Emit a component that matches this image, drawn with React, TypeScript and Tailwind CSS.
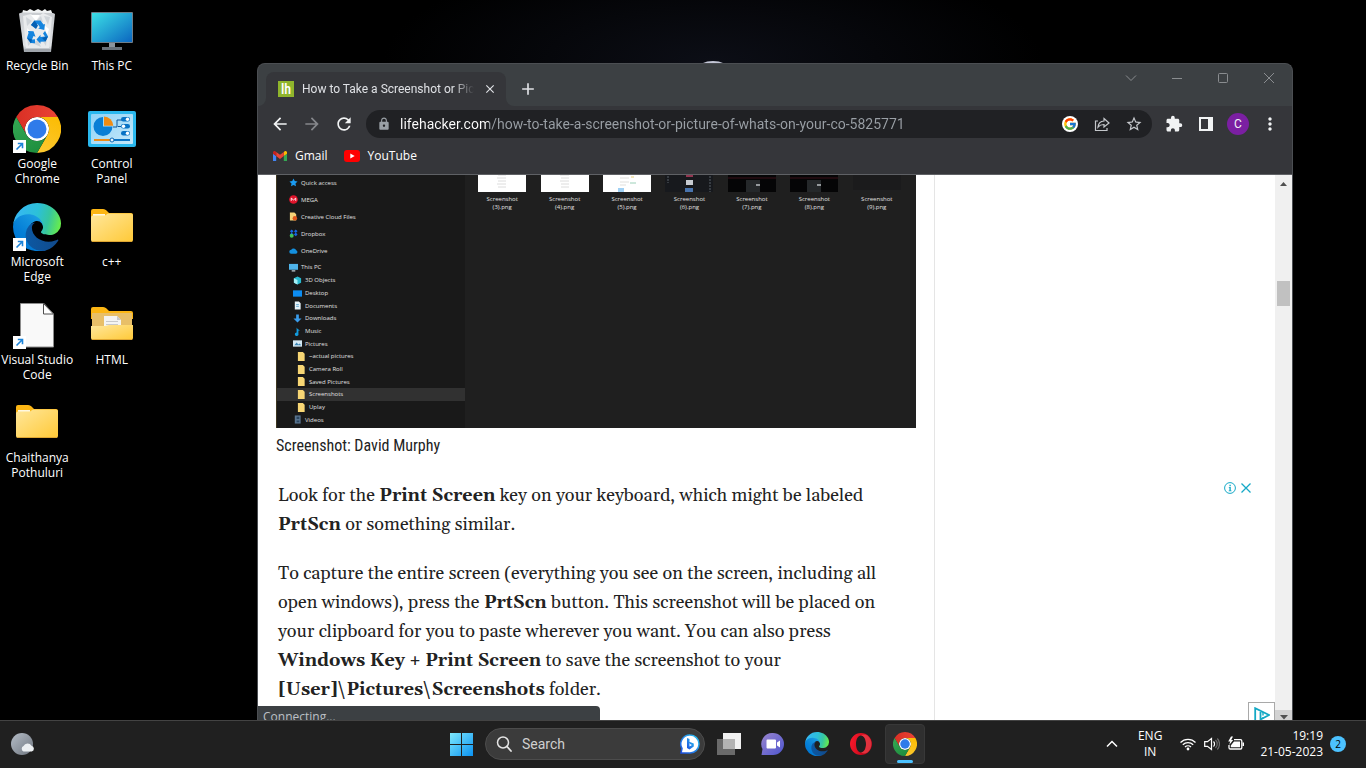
import type { ReactNode } from "react";
import { FcGoogle } from "react-icons/fc";
import {
  MdAdd,
  MdArrowBack,
  MdArrowForward,
  MdClose,
  MdExtension,
  MdLock,
  MdMoreVert,
  MdRefresh,
  MdStarOutline,
} from "react-icons/md";

function ChromeLogo({ className }: { className: string }) {
  return (
    <svg viewBox="0 0 48 48" className={className} aria-hidden="true">
      <defs>
        <linearGradient id="chrome-red" x1="3.2" y1="15" x2="44.8" y2="15" gradientUnits="userSpaceOnUse">
          <stop stopColor="#d93025" />
          <stop offset="1" stopColor="#ea4335" />
        </linearGradient>
        <linearGradient id="chrome-yellow" x1="20.7" y1="47.7" x2="41.5" y2="11.7" gradientUnits="userSpaceOnUse">
          <stop stopColor="#fcc934" />
          <stop offset="1" stopColor="#fbbc04" />
        </linearGradient>
        <linearGradient id="chrome-green" x1="26.6" y1="46.5" x2="5.8" y2="10.5" gradientUnits="userSpaceOnUse">
          <stop stopColor="#1e8e3e" />
          <stop offset="1" stopColor="#34a853" />
        </linearGradient>
      </defs>
      <circle cx="24" cy="24" r="12" fill="#fff" />
      <path d="M24,12H44.7812a23.9939,23.9939,0,0,0-41.5639.0029L13.6079,30l.0093-.0024A11.9852,11.9852,0,0,1,24,12Z" fill="url(#chrome-red)" />
      <path d="M34.3913,30.0029,24.0007,48A23.994,23.994,0,0,0,44.78,12.0031H23.9989l-.0025.0093A11.985,11.985,0,0,1,34.3913,30.0029Z" fill="url(#chrome-yellow)" />
      <path d="M13.6086,30.0031,3.218,12.006A23.994,23.994,0,0,0,24.0025,48L34.3931,30.0029l-.0067-.0068a11.9852,11.9852,0,0,1-20.7778.007Z" fill="url(#chrome-green)" />
      <circle cx="24" cy="24" r="9.5" fill="#2f7bea" />
    </svg>
  );
}

function EdgeLogo({ className }: { className: string }) {
  return (
    <svg viewBox="0 0 256 256" className={className} aria-hidden="true">
      <defs>
        <linearGradient id="edge-navy" x1="63" y1="178" x2="242" y2="178" gradientUnits="userSpaceOnUse">
          <stop stopColor="#0c59a4" />
          <stop offset="1" stopColor="#114a8b" />
        </linearGradient>
        <linearGradient id="edge-blue" x1="157" y1="100" x2="46" y2="221" gradientUnits="userSpaceOnUse">
          <stop stopColor="#1b9de2" />
          <stop offset="0.16" stopColor="#1595df" />
          <stop offset="0.67" stopColor="#0680d7" />
          <stop offset="1" stopColor="#0078d4" />
        </linearGradient>
        <linearGradient id="edge-green" x1="20" y1="60" x2="250" y2="115" gradientUnits="userSpaceOnUse">
          <stop stopColor="#35b8f1" />
          <stop offset="0.45" stopColor="#2cc0d8" />
          <stop offset="0.72" stopColor="#36c6a0" />
          <stop offset="1" stopColor="#66eb4e" />
        </linearGradient>
      </defs>
      <path fill="url(#edge-navy)" d="M235.7 195.5a93.7 93.7 0 0 1-10.6 4.7 101.9 101.9 0 0 1-35.9 6.4c-47.3 0-88.5-32.5-88.5-74.3a31.5 31.5 0 0 1 16.4-27.3c-42.8 1.8-53.8 46.4-53.8 72.5 0 74 68.1 81.4 82.8 81.4 7.9 0 19.8-2.3 27-4.6l1.3-.4a128.3 128.3 0 0 0 66.6-52.8 4 4 0 0 0-5.3-5.6Z" />
      <path fill="url(#edge-blue)" d="M105.7 241.4a79.2 79.2 0 0 1-22.7-21.3 80.7 80.7 0 0 1 29.5-120c3.2-1.5 8.5-4.1 15.6-4a32.4 32.4 0 0 1 25.7 13 31.9 31.9 0 0 1 6.3 18.7c0-.2 24.5-79.6-80-79.6-43.9 0-80 41.6-80 78.2a130.2 130.2 0 0 0 12.1 56 128 128 0 0 0 156.4 67 75.5 75.5 0 0 1-62.8-8Z" />
      <path fill="url(#edge-green)" d="M152.3 148.9c-.8 1-3.3 2.5-3.3 5.7 0 2.6 1.7 5.1 4.7 7.2 14.4 10 41.5 8.7 41.6 8.7 10.7 0 21.1-2.9 30.3-8.3A61.4 61.4 0 0 0 256 109.2c.2-22.6-8-37.6-11.4-44.1C223.5 23.9 177.9 0 128.3 0A128 128 0 0 0 .3 126.2c.5-36.5 36.8-66 80-66 3.5 0 23.5.3 42 10.1 16.3 8.6 24.9 18.9 30.8 29.2 6.2 10.7 7.3 24.1 7.3 29.5 0 5.3-2.7 13.3-8.1 19.9Z" />
    </svg>
  );
}

function RecycleBin() {
  return (
    <svg viewBox="0 0 48 48" className="size-12" aria-hidden="true">
      <defs>
        <linearGradient id="bin-body" x1="0" y1="0" x2="0" y2="1">
          <stop stopColor="#c9ccd0" />
          <stop offset="0.85" stopColor="#dfe2e5" />
          <stop offset="1" stopColor="#9da2a8" />
        </linearGradient>
      </defs>
      <path d="M9 7l1-4 4 1 3-2 4 2 4-2 4 2 3-2 2 2 4-1 2 5z" fill="#f1f3f4" />
      <path d="M6 6.500l3-1 31 .5 2 1-4 38H11z" fill="url(#bin-body)" />
      <path d="M10 9l8-2 5 4 7-5 9 4-3 31H13z" fill="#e9ebed" />
      <path d="M13 10l6 4-5 5zM31 9l6 1-2 8zM14 29l6 5-5 5zM29 33l5-4-1 10zM23 14l5-5 2 6zM19 36l6-3 3 7z" fill="#cfd4d9" />
      <path d="M18 8l5 6 4-6zM31 18l5 4-2 6zM14 21l3 3-2 4z" fill="#fff" />
      <path d="M11.500 42h26l-.4 3H12z" fill="#a0a5ab" />
      <g fill="#1484de">
        <path d="M18 18l3.500-4.500h6l3 4 1.500-.500-.800 6-6-1.500 1.700-1.200-2.400-3.600-2 4.300z" />
        <path d="M32 24l3 5.500-2.500 5-5 .3v2l-4-4.300 4-4.800v2.300l4.500-.500-2-3z" />
        <path d="M15 24l5.500.200 2 5.500-2-.700-1.500 3.500 3-.200v4l-4.500-.300-3.500-5 1.500-5z" />
      </g>
      <path d="M18 18l3.500-4.500 3.500 5-2 3.500zM32 30l3-.500-2.500 5-3.500-3.500zM14 31l5 1.500-1 3.800z" fill="#0560b4" />
    </svg>
  );
}

function ThisPc() {
  return (
    <svg viewBox="0 0 48 48" className="size-12" aria-hidden="true">
      <defs>
        <linearGradient id="pc-screen" x1="0" y1="0" x2="1" y2="1">
          <stop stopColor="#3bdfe6" />
          <stop offset="1" stopColor="#0b66c0" />
        </linearGradient>
      </defs>
      <path d="M21 35h6v6h-6z" fill="#8b949c" />
      <path d="M14 40h20v3H14z" fill="#68717a" />
      <rect x="3" y="5" width="42" height="31" rx="1" fill="#6f7d88" />
      <rect x="4" y="6" width="40" height="29" fill="url(#pc-screen)" />
    </svg>
  );
}

function ControlPanel() {
  return (
    <svg viewBox="0 0 48 48" className="size-12" aria-hidden="true">
      <defs>
        <linearGradient id="panel-in" x1="0" y1="0" x2="1" y2="1">
          <stop stopColor="#8fd3f7" />
          <stop offset="1" stopColor="#c4e8fa" />
        </linearGradient>
      </defs>
      <rect y="6" width="48" height="36" rx="2" fill="#2ab8ee" />
      <rect x="3" y="9" width="42" height="30" rx="1" fill="url(#panel-in)" />
      <path d="M15 12a9.500 9.500 0 1 0 9.500 9.500H15z" fill="#0a7fd6" />
      <path d="M16 11.500a9.500 9.500 0 0 1 9.300 9.200H16z" fill="#f08c14" />
      <path d="M25 22h4v-7h5M33 21.500h-3" fill="none" stroke="#0d579b" strokeWidth="1" />
      <rect x="33" y="12" width="9" height="4.500" rx="2.200" fill="#0873c5" />
      <rect x="33" y="19" width="9" height="4.500" rx="2.200" fill="#0873c5" />
      <rect x="33" y="26" width="9" height="4.500" rx="2.200" fill="#0873c5" />
      <g fill="#fff">
        <circle cx="39.500" cy="14.200" r="1.700" />
        <circle cx="35.500" cy="21.200" r="1.700" />
        <circle cx="39.500" cy="28.200" r="1.700" />
      </g>
      <path d="M6 34h18v2H6z" fill="#f08c14" />
      <path d="M24 34h18v2H24z" fill="#0873c5" />
      <circle cx="24" cy="35" r="2" fill="#e8f6ff" stroke="#0d69b5" />
    </svg>
  );
}

function Folder({ open = false }: { open?: boolean }) {
  return (
    <svg viewBox="0 0 48 48" className="size-12" aria-hidden="true">
      <defs>
        <linearGradient id="folder-front" x1="0" y1="0" x2="1" y2="1">
          <stop stopColor="#ffe79b" />
          <stop offset="1" stopColor="#ffc937" />
        </linearGradient>
      </defs>
      <path d="M3 8a2 2 0 0 1 2-2h10c2 0 3 1 4 2l2 2h22a2 2 0 0 1 2 2v6H3z" fill="#fcb614" />
      {open ? (
        <>
          <path d="M4 12h40v18H4z" fill="#e8bf68" />
          <path d="M16 15h13l4 4v14H16z" fill="#f4f4f2" />
          <path d="M29 15l4 4h-4zM18 20h12v1H18zM18 23h12v1H18z" fill="#c8c9ca" />
          <path d="M3 25h14l4-1 3 0 2 0h19v13a2 2 0 0 1-2 2H5a2 2 0 0 1-2-2z" fill="url(#folder-front)" />
        </>
      ) : (
        <>
          <path d="M5 11h12v3H5z" fill="#fff8e0" />
          <path d="M3 14.500a2 2 0 0 1 2-2h12l3-2h23a2 2 0 0 1 2 2v24.500a2 2 0 0 1-2 2H5a2 2 0 0 1-2-2z" fill="url(#folder-front)" />
        </>
      )}
      <path d="M4 38.500h40" stroke="#dfa632" strokeWidth="1" />
    </svg>
  );
}

function BlankPage() {
  return (
    <svg viewBox="0 0 48 48" className="size-12" aria-hidden="true">
      <path d="M7.500 2.500h23.500l9.500 10.500v33h-33z" fill="#f9f9f9" stroke="#8c8c8c" />
      <path d="M30.500 2.500v10.500h10z" fill="#fff" stroke="#4e4e4e" />
    </svg>
  );
}

function Shortcut({ children }: { children: ReactNode }) {
  return (
    <span className="relative">
      {children}
      <svg viewBox="0 0 13 13" className="absolute bottom-0 left-0 size-[13px]" aria-hidden="true">
        <path d="M0 0h13v13H0z" fill="#fff" />
        <path d="M3.500 9.500l5.500-5.500M4.800 3.500h4.700v4.700" fill="none" stroke="#1c83d8" strokeWidth="1.600" />
      </svg>
    </span>
  );
}

const desktopItems: { label: string; icon: ReactNode }[] = [
  { label: "Recycle Bin", icon: <RecycleBin /> },
  { label: "This PC", icon: <ThisPc /> },
  { label: "Google Chrome", icon: <Shortcut><ChromeLogo className="size-12" /></Shortcut> },
  { label: "Control Panel", icon: <ControlPanel /> },
  { label: "Microsoft Edge", icon: <Shortcut><EdgeLogo className="size-12" /></Shortcut> },
  { label: "c++", icon: <Folder /> },
  { label: "Visual Studio Code", icon: <Shortcut><BlankPage /></Shortcut> },
  { label: "HTML", icon: <Folder open /> },
  { label: "Chaithanya Pothuluri", icon: <Folder /> },
];

function DesktopIcons() {
  return (
    <div className="grid w-[149px] auto-rows-[98px] grid-cols-2 pt-[7px]">
      {desktopItems.map((item) => (
        <button key={item.label} type="button" className="flex flex-col items-center gap-[3px]">
          {item.icon}
          <span className="text-center text-[12px] leading-[15px] text-white">{item.label}</span>
        </button>
      ))}
    </div>
  );
}

function TabStrip() {
  return (
    <div className="flex h-[42px] justify-between pl-2">
      <div className="flex items-end">
        <div className="relative flex h-[34px] w-60 items-center gap-2 rounded-t-lg bg-[#35363a] pl-3 pr-2">
          <svg viewBox="0 0 8 8" className="absolute -left-2 bottom-0 size-2" aria-hidden="true">
            <path d="M8 0v8H0a8 8 0 0 0 8-8z" fill="#35363a" />
          </svg>
          <svg viewBox="0 0 8 8" className="absolute -right-2 bottom-0 size-2" aria-hidden="true">
            <path d="M0 0v8h8a8 8 0 0 1-8-8z" fill="#35363a" />
          </svg>
          <span className="flex size-4 shrink-0 items-center justify-center bg-[#8fb52c] font-['Roboto_Condensed','Liberation_Sans_Narrow',sans-serif] text-[14px] font-medium leading-4 text-white">
            lh
          </span>
          <span className="min-w-0 flex-1 overflow-hidden whitespace-nowrap font-[Roboto,'Open_Sans',sans-serif] text-[12px] text-[#dfe1e5] [mask-image:linear-gradient(90deg,#000_88%,transparent)]">
            How to Take a Screenshot or Pict
          </span>
          <button type="button" aria-label="Close tab" className="flex size-4 shrink-0 items-center justify-center text-[#dfe1e5]">
            <MdClose className="size-3.5" />
          </button>
        </div>
        <button type="button" aria-label="New tab" className="ml-2 flex h-[34px] w-7 items-center justify-center text-[#dfe1e5]">
          <MdAdd className="size-5" />
        </button>
      </div>
      <div className="flex h-7 text-[#8a8d90]">
        {[
          ["Search tabs", "M1 3.500l5 5 5-5"],
          ["Minimize", "M1 6.500h10"],
          ["Maximize", "M1.500 2.500a1 1 0 0 1 1-1h7a1 1 0 0 1 1 1v7a1 1 0 0 1-1 1h-7a1 1 0 0 1-1-1z"],
          ["Close", "M1 1l10 10M11 1L1 11"],
        ].map(([name, d]) => (
          <button key={name} type="button" aria-label={name} className="flex w-[46px] items-center justify-center">
            <svg viewBox="0 0 12 12" className="size-3" aria-hidden="true">
              <path d={d} fill="none" stroke="currentColor" />
            </svg>
          </button>
        ))}
      </div>
    </div>
  );
}

function Toolbar() {
  const button = "flex h-7 w-7 shrink-0 items-center justify-center text-[#f1f3f4]";
  return (
    <div className="flex h-9 items-center gap-1 px-2">
      <button type="button" aria-label="Back" className={button}>
        <MdArrowBack className="size-5" />
      </button>
      <button type="button" aria-label="Forward" className="flex h-7 w-7 shrink-0 items-center justify-center text-[#85878b]">
        <MdArrowForward className="size-5" />
      </button>
      <button type="button" aria-label="Reload" className={button}>
        <MdRefresh className="size-5" />
      </button>
      <div className="mx-1 flex h-7 flex-1 items-center gap-2 rounded-full bg-[#202124] px-2.5 text-[#c4c7cb]">
        <span className="flex size-4 shrink-0 items-center justify-center text-[#9aa0a6]">
          <MdLock className="size-3.5" />
        </span>
        <input
          type="text"
          aria-label="Address"
          defaultValue="lifehacker.com/how-to-take-a-screenshot-or-picture-of-whats-on-your-co-5825771"
          className="min-w-0 flex-1 bg-[linear-gradient(90deg,#fff_89px,#9aa0a6_89px)] bg-clip-text font-[Roboto,'Open_Sans',sans-serif] text-[14px] text-transparent outline-none"
        />
        <button type="button" aria-label="Google Lens" className="flex size-4 items-center justify-center rounded-full bg-white">
          <FcGoogle className="size-3.5" />
        </button>
        <button type="button" aria-label="Share" className="ml-2 flex size-4 items-center justify-center">
          <svg viewBox="0 0 16 16" className="size-4" aria-hidden="true">
            <path d="M4 5H1.500v9.500H13V12M10 2.500L15 7l-5 4V8.500c-3 0-4.500.7-6 2.500.4-3.500 2.300-5.700 6-6z" fill="none" stroke="currentColor" strokeWidth="1.200" />
          </svg>
        </button>
        <button type="button" aria-label="Bookmark" className="ml-2 flex size-4 items-center justify-center">
          <MdStarOutline className="size-[18px] shrink-0" />
        </button>
      </div>
      <button type="button" aria-label="Extensions" className={button}>
        <MdExtension className="size-[18px]" />
      </button>
      <button type="button" aria-label="Side panel" className={button}>
        <svg viewBox="0 0 14 14" className="size-3.5" aria-hidden="true">
          <path d="M0 0h14v14H0zM2 2v10h7V2z" fill="currentColor" fillRule="evenodd" />
        </svg>
      </button>
      <button type="button" aria-label="Profile" className={button}>
        <span className="flex size-[22px] items-center justify-center rounded-full bg-[#7b1fa2] font-[Roboto,sans-serif] text-[12px]">C</span>
      </button>
      <button type="button" aria-label="Menu" className={button}>
        <MdMoreVert className="size-5" />
      </button>
    </div>
  );
}

function Bookmarks() {
  return (
    <nav className="flex h-8 gap-4 pb-1 pl-[15px] text-[12px] text-white">
      <a href="#gmail" className="flex items-center gap-2">
        <svg viewBox="52 42 88 66" className="w-3.5" aria-hidden="true">
          <path fill="#4285f4" d="M58 108h14V74L52 59v43c0 3.320 2.690 6 6 6" />
          <path fill="#34a853" d="M120 108h14c3.320 0 6-2.690 6-6V59l-20 15" />
          <path fill="#fbbc04" d="M120 48v26l20-15v-8c0-7.420-8.470-11.650-14.400-7.200" />
          <path fill="#ea4335" d="M72 74V48l24 18 24-18v26L96 92" />
          <path fill="#c5221f" d="M52 51v8l20 15V48l-5.600-4.200c-5.940-4.450-14.400-.220-14.400 7.200" />
        </svg>
        Gmail
      </a>
      <a href="#youtube" className="flex items-center gap-2">
        <svg viewBox="0 0 16 12" className="w-4" aria-hidden="true">
          <rect width="16" height="12" rx="3" fill="#f00" />
          <path d="M6.300 3.500v5L10.700 6z" fill="#fff" />
        </svg>
        YouTube
      </a>
    </nav>
  );
}

const placeIcons: Record<string, ReactNode> = {
  star: <path d="M5 .5l1.400 2.900 3.100.4-2.300 2.200.6 3.200L5 7.700 2.200 9.200l.6-3.200L.5 3.800l3.100-.4z" fill="#1b9bf0" />,
  mega: <><circle cx="5" cy="5" r="4.800" fill="#e0142b" /><path d="M2.500 6.500v-3L5 5.500l2.500-2v3" fill="none" stroke="#fff" /></>,
  cloud: <><path d="M1 .5h5l2 2v7H1z" fill="#f6d277" /><circle cx="6.500" cy="7" r="2.500" fill="#e0561c" /></>,
  dropbox: <><path d="M3 .5l2 2-2 2-2-2zM7.500.500l2 2-2 2-2-2zM3 4l2 2-2 2-2-2zM7.500 4l2 2-2 2-2-2z" fill="#1667e8" /><circle cx="3" cy="7.500" r="2.200" fill="#40c15c" /></>,
  onedrive: <path d="M2.500 8.500a2.200 2.200 0 0 1 0-4.400 3.200 3.200 0 0 1 5.500.6A2 2 0 0 1 8 8.500z" fill="#1490df" />,
  pc: <><path d="M0 1h10v6.500H0z" fill="#4fb4ea" /><path d="M3 8h4v1.500H3z" fill="#b8c4cc" /></>,
  cube: <><path d="M1 2.500L5 .5l4 2v5l-4 2-4-2z" fill="#27b9cf" /><path d="M1 2.500l4 2v5l-4-2z" fill="#a5eef4" /></>,
  desktop: <path d="M0 1.500h10v7H0z" fill="#0d8df2" />,
  document: <><path d="M2 .5h4.500l2 2v7H2z" fill="#e6f1f7" /><path d="M3.500 4h3M3.500 6h3" stroke="#57a2cc" /></>,
  down: <path d="M3.500.5h3V5H9.500L5 9.500.500 5h3z" fill="#3a9dec" />,
  music: <path d="M4 .5c.5 2 3 2 3.500 4L6 4v3.500A2 2 0 1 1 4 6z" fill="#129bdd" />,
  picture: <><path d="M0 1.500h10v7H0z" fill="#d5e9f4" /><path d="M1.500 7L4 4l2 2 1.500-1L9 7z" fill="#3d87b6" /></>,
  folder: <path d="M1 0h5.500l2 2v8H1z" fill="#f7d674" />,
  video: <><path d="M2 .5h6.500v9H2z" fill="#58738e" /><path d="M4 2h3v2.500H4zM4 6h3v2H4z" fill="#2a455f" /></>,
};

function PlaceIcon({ kind }: { kind: string }) {
  return (
    <svg viewBox="0 0 10 10" className="size-[9px] shrink-0" aria-hidden="true">
      {placeIcons[kind]}
    </svg>
  );
}

const topPlaces = [
  ["Quick access", "star"],
  ["MEGA", "mega"],
  ["Creative Cloud Files", "cloud"],
  ["Dropbox", "dropbox"],
  ["OneDrive", "onedrive"],
];

const pcPlaces: [string, string, string][] = [
  ["3D Objects", "cube", "pl-4"],
  ["Desktop", "desktop", "pl-4"],
  ["Documents", "document", "pl-4"],
  ["Downloads", "down", "pl-4"],
  ["Music", "music", "pl-4"],
  ["Pictures", "picture", "pl-4"],
  ["~actual pictures", "folder", "pl-5"],
  ["Camera Roll", "folder", "pl-5"],
  ["Saved Pictures", "folder", "pl-5"],
  ["Screenshots", "folder", "pl-5 bg-[#313131]"],
  ["Uplay", "folder", "pl-5"],
  ["Videos", "video", "pl-4"],
];

const thumbs = [
  <><path d="M0 0h48v17H0z" fill="#fff" /><path d="M20 0h8M19 3h9M20 6h8M19 9h9M20 12h8" stroke="#dcdcdc" /></>,
  <><path d="M0 0h48v17H0z" fill="#fff" /><path d="M19 0h9M20 3h8M19 6h9M20 9h8M20 12h8" stroke="#dcdcdc" /></>,
  <><path d="M0 0h48v17H0z" fill="#fff" /><path d="M17 3h9M17 7h9M17 10h6" stroke="#e0dfdc" /><path d="M28 2h3" stroke="#e8d178" /><path d="M27 8h6" stroke="#9bd0b8" /><path d="M15 13h6v4h-6z" fill="#9fd0f4" /></>,
  <><path d="M0 0h48v17H0z" fill="#17191d" /><path d="M21 0h7v2h-7z" fill="#923650" /><path d="M21 5h7v5h-7z" fill="#c6cad0" /><path d="M20 13h8v4h-8z" fill="#4974ad" /><path d="M45 1v16M3 1v7" stroke="#596069" strokeDasharray="2 1" /></>,
  <><path d="M0 0h48v17H0z" fill="#050506" /><path d="M0 3h48" stroke="#3b1118" /><path d="M18 5h14v12H18z" fill="#25282a" /><path d="M28 9h4v2h-4z" fill="#95999c" /></>,
  <><path d="M0 0h48v17H0z" fill="#050506" /><path d="M0 3h48" stroke="#3b1118" /><path d="M17 5h14v12H17z" fill="#25282a" /><path d="M27 9h4v2h-4z" fill="#95999c" /></>,
  <><path d="M0 0h48v17H0z" fill="#1b1b1c" /><path d="M0 16h48" stroke="#242424" /></>,
];

function ExplorerShot() {
  return (
    <div className="flex h-[253px] bg-[#1f1f1f] text-[6px] leading-2 text-[#e0e0e0]">
      <div className="flex w-[189px] shrink-0 flex-col border-l border-[#3d3620] bg-[#191919] pb-0.5">
        {topPlaces.map(([label, kind]) => (
          <div key={label} className="flex h-[17px] items-center gap-[3px] pb-0.5 pl-3">
            <PlaceIcon kind={kind} />
            {label}
          </div>
        ))}
        <div className="flex h-3.5 items-center gap-[3px] pl-3">
          <PlaceIcon kind="pc" />
          This PC
        </div>
        {pcPlaces.map(([label, kind, look]) => (
          <div key={label} className={"flex flex-1 items-center gap-[3px] " + look}>
            <PlaceIcon kind={kind} />
            {label}
          </div>
        ))}
      </div>
      <div className="grid flex-1 grid-cols-7 pl-1.5 pr-2 text-center">
        {thumbs.map((art, i) => (
          <div key={i} className="flex flex-col items-center gap-[3px]">
            <svg viewBox="0 0 48 17" className="h-[17px] w-12" aria-hidden="true">
              {art}
            </svg>
            <span>
              Screenshot
              <br />({i + 3}).png
            </span>
          </div>
        ))}
      </div>
    </div>
  );
}

function Article() {
  return (
    <article className="w-[677px] shrink-0 overflow-hidden border-r border-[#e5e5e5] px-[18px] text-[#222]">
      <figure className="mb-[17px]">
        <ExplorerShot />
        <figcaption className="h-9 font-['Roboto_Condensed','Liberation_Sans_Narrow',sans-serif] text-[16px] leading-9">
          Screenshot: David Murphy
        </figcaption>
      </figure>
      <div className="flex flex-col gap-5 whitespace-nowrap pl-0.5 font-[Georgia,Gelasio,'Liberation_Serif',serif] text-[18px] leading-[29px]">
        <p>
          Look for the <b>Print Screen</b> key on your keyboard, which might be labeled
          <br />
          <b>PrtScn</b> or something similar.
        </p>
        <p>
          To capture the entire screen (everything you see on the screen, including all
          <br />
          open windows), press the <b>PrtScn</b> button. This screenshot will be placed on
          <br />
          your clipboard for you to paste wherever you want. You can also press
          <br />
          <b>Windows Key</b> + <b>Print Screen</b> to save the screenshot to your
          <br />
          <b>[User]\Pictures\Screenshots</b> folder.
        </p>
      </div>
    </article>
  );
}

function AdColumn() {
  return (
    <aside className="flex flex-1 flex-col items-end justify-between pt-[307px]">
      <div className="flex items-center gap-1 pr-[23px] text-[#16a9c7]">
        <button type="button" aria-label="Ad information">
          <svg viewBox="0 0 12 12" className="size-3" aria-hidden="true">
            <circle cx="6" cy="6" r="5.400" fill="none" stroke="currentColor" />
            <path d="M5.400 2.800h1.400v1.400H5.400zM4.800 5h2v3.500h.7v.8H4.700v-.8h.7V5.800h-.6z" fill="currentColor" />
          </svg>
        </button>
        <button type="button" aria-label="Close ad">
          <svg viewBox="0 0 12 12" className="size-3" aria-hidden="true">
            <path d="M1.500 1.500l9 9M10.500 1.500l-9 9" stroke="currentColor" strokeWidth="1.300" />
          </svg>
        </button>
      </div>
      <div className="flex h-[18px] w-[27px] justify-center overflow-hidden border border-b-0 border-[#a9a9a9] pt-1">
        <svg viewBox="0 0 16 18" className="h-[18px] w-4 shrink-0" aria-hidden="true">
          <path d="M4 14.500H1.200V1.200L15 8 6.500 12.500V5" fill="none" stroke="#12a8c4" strokeWidth="1.800" />
          <path d="M9 5v3.500M9 10v1.500" stroke="#12a8c4" strokeWidth="1.400" />
        </svg>
      </div>
    </aside>
  );
}

function Scrollbar() {
  return (
    <div className="flex w-[17px] shrink-0 flex-col items-center bg-[#f0f0f0]">
      <svg viewBox="0 0 17 17" className="size-[17px]" aria-hidden="true">
        <path d="M5 11l3.500-4 3.500 4z" fill="#505050" />
      </svg>
      <div className="mt-[89px] h-[25px] w-[13px] bg-[#c1c1c1]" />
      <div className="mt-auto flex h-2.5 w-full items-end justify-center bg-[#d2d2d2]">
        <svg viewBox="0 0 8 5" className="h-[5px] w-2" aria-hidden="true">
          <path d="M0 0h8L4 4.500z" fill="#505050" />
        </svg>
      </div>
    </div>
  );
}

function BrowserWindow() {
  return (
    <section className="absolute bottom-0 left-[257px] right-[73px] top-[63px] flex flex-col overflow-hidden rounded-t-lg border border-b-0 border-[#4b4e52] bg-[#3c4043]">
      <TabStrip />
      <div className="border-b border-[#5f6165] bg-[#35363a]">
        <Toolbar />
        <Bookmarks />
      </div>
      <div className="relative flex min-h-0 flex-1 overflow-hidden bg-white">
        <Article />
        <AdColumn />
        <Scrollbar />
        <div className="absolute bottom-0 left-0 h-3.5 w-[342px] overflow-hidden rounded-tr bg-[#3c4043] pl-[5px] pt-[3px] text-[12px] leading-4 text-[#bdc1c6]">
          Connecting...
        </div>
      </div>
    </section>
  );
}

function TaskButton({ label, active = false, children }: { label: string; active?: boolean; children: ReactNode }) {
  return (
    <button
      type="button"
      aria-label={label}
      className={active
        ? "relative flex size-10 items-center justify-center rounded border border-[#383838] bg-[#2f2f2f]"
        : "flex size-10 items-center justify-center"}
    >
      {children}
      {active && <span className="absolute bottom-0 h-[3px] w-4 rounded-full bg-[#4cc2ff]" />}
    </button>
  );
}

function Taskbar() {
  return (
    <footer className="grid h-12 shrink-0 grid-cols-[1fr_auto_1fr] items-center bg-[#202020] text-white shadow-[inset_0_1px_0_#434343]">
      <button type="button" aria-label="Weather" className="ml-[11px] size-6">
        <svg viewBox="0 0 24 24" className="size-6" aria-hidden="true">
          <defs>
            <linearGradient id="moon" x1="0" y1="0" x2="1" y2="1">
              <stop stopColor="#b5bdc7" />
              <stop offset="1" stopColor="#6f7680" />
            </linearGradient>
          </defs>
          <circle cx="11" cy="12" r="11" fill="url(#moon)" />
          <path d="M12.500 19.500a3 3 0 0 1 0-5.500 4.500 4.500 0 0 1 8-.3 3 3 0 0 1 .3 5.800z" fill="#eceff2" />
        </svg>
      </button>
      <div className="flex items-center gap-1">
        <TaskButton label="Start">
          <svg viewBox="0 0 23 23" className="size-[23px]" aria-hidden="true">
            <defs>
              <linearGradient id="start" x1="0" y1="0" x2="23" y2="23" gradientUnits="userSpaceOnUse">
                <stop stopColor="#7fe9fd" />
                <stop offset="1" stopColor="#0a92f2" />
              </linearGradient>
            </defs>
            <path d="M0 0h11v11H0zM12 0h11v11H12zM0 12h11v11H0zM12 12h11v11H12z" fill="url(#start)" />
          </svg>
        </TaskButton>
        <div className="flex h-8 w-[220px] items-center gap-2.5 rounded-full border border-[#4c4c4c] bg-[#3b3b3b] pl-2.5 pr-1">
          <svg viewBox="0 0 16 16" className="size-4 shrink-0" aria-hidden="true">
            <circle cx="7" cy="6.500" r="5.500" fill="none" stroke="#e4e4e4" strokeWidth="1.500" />
            <path d="M11 10.500l4 4.500" stroke="#e4e4e4" strokeWidth="1.800" strokeLinecap="round" />
          </svg>
          <input
            type="search"
            aria-label="Search"
            placeholder="Search"
            className="min-w-0 flex-1 bg-transparent font-[Roboto,'Open_Sans',sans-serif] text-[14px] text-white outline-none placeholder:text-[#cfcfcf]"
          />
          <svg viewBox="0 0 20 20" className="size-5 shrink-0" aria-hidden="true">
            <defs>
              <linearGradient id="bing" x1="0" y1="1" x2="1" y2="0">
                <stop stopColor="#1b4de0" />
                <stop offset="1" stopColor="#2bc4f0" />
              </linearGradient>
            </defs>
            <path d="M10 1a9 9 0 1 1 0 18H1l1-4.500A9 9 0 0 1 10 1z" fill="#fff" stroke="url(#bing)" strokeWidth="1.500" />
            <path d="M7 4l2.500 1v7.500L12 11l-2-1-.7-2.300 4.500 1.800v3L9.500 15.500 7 14z" fill="url(#bing)" />
          </svg>
        </div>
        <TaskButton label="Task view">
          <svg viewBox="0 0 24 22" className="w-6" aria-hidden="true">
            <path d="M6 0h18v16H6z" fill="#f1f1f1" />
            <path d="M0 6h18v16H0z" fill="#6a6a6a" />
            <path d="M6 6h12v10H6z" fill="#b3b3b3" />
          </svg>
        </TaskButton>
        <TaskButton label="Chat">
          <svg viewBox="0 0 24 24" className="size-6" aria-hidden="true">
            <defs>
              <linearGradient id="chat" x1="0" y1="0" x2="1" y2="1">
                <stop stopColor="#9a85ce" />
                <stop offset="1" stopColor="#4d55cf" />
              </linearGradient>
            </defs>
            <path d="M12 1a11 11 0 1 1 0 22H.500l1-6A11 11 0 0 1 12 1z" fill="url(#chat)" />
            <path d="M5.500 8.500a1 1 0 0 1 1-1H14a1 1 0 0 1 1 1v7a1 1 0 0 1-1 1H6.500a1 1 0 0 1-1-1zM16 10.500l3-2v7l-3-2z" fill="#fff" />
          </svg>
        </TaskButton>
        <TaskButton label="Edge">
          <EdgeLogo className="size-6" />
        </TaskButton>
        <TaskButton label="Opera">
          <svg viewBox="0 0 24 24" className="size-6" aria-hidden="true">
            <defs>
              <linearGradient id="opera" x1="0" y1="0" x2="1" y2="0.300">
                <stop stopColor="#ff1b2d" />
                <stop offset="0.600" stopColor="#d80d20" />
                <stop offset="1" stopColor="#a70014" />
              </linearGradient>
            </defs>
            <path d="M12 1a11 11 0 1 0 0 22 11 11 0 0 0 0-22zm0 2.500c3 0 5 4 5 8.500s-2 8.500-5 8.500S7 16.500 7 12s2-8.500 5-8.500z" fillRule="evenodd" fill="url(#opera)" />
            <path d="M12 3.500c2-1.500 4.500-1.300 6.500 0a11 11 0 0 1 0 17c-2 1.300-4.500 1.500-6.500 0 3 0 5-4 5-8.500s-2-8.500-5-8.500z" fill="#f0414b" opacity="0.750" />
          </svg>
        </TaskButton>
        <TaskButton label="Chrome" active>
          <ChromeLogo className="size-6" />
        </TaskButton>
      </div>
      <div className="flex items-center justify-end pr-5 text-[12px] leading-4">
        <button type="button" aria-label="Show hidden icons">
          <svg viewBox="0 0 16 16" className="size-4" aria-hidden="true">
            <path d="M3 10.500l5-5 5 5" fill="none" stroke="#fff" strokeWidth="1.500" />
          </svg>
        </button>
        <button type="button" className="mx-[18px] text-center">
          ENG
          <br />
          IN
        </button>
        <button type="button" aria-label="Network, volume and battery" className="flex items-center gap-2">
          <svg viewBox="0 0 16 16" className="size-4" aria-hidden="true">
            <g fill="none" stroke="#fff" strokeWidth="1.300">
              <path d="M.5 6.500a10.500 10.500 0 0 1 15 0M2.800 8.800a7.400 7.400 0 0 1 10.400 0M5 11a4.300 4.300 0 0 1 6 0" />
            </g>
            <circle cx="8" cy="13" r="1.400" fill="#fff" />
          </svg>
          <svg viewBox="0 0 16 16" className="size-4" aria-hidden="true">
            <path d="M.700 5.700h2.800L7.500 2.500v11l-4-3.200H.700z" fill="none" stroke="#fff" strokeWidth="1.200" />
            <path d="M9.500 5.500a3.500 3.500 0 0 1 0 5" fill="none" stroke="#fff" strokeWidth="1.200" />
            <path d="M11.500 4a5.500 5.500 0 0 1 0 8M13.300 2.500a8 8 0 0 1 0 11" fill="none" stroke="#6d6d6d" strokeWidth="1.200" />
          </svg>
          <svg viewBox="0 0 16 16" className="size-4" aria-hidden="true">
            <path d="M6 3.700h6.500a1.300 1.300 0 0 1 1.300 1.300v6.700a1.300 1.300 0 0 1-1.300 1.300H2.300A1.300 1.300 0 0 1 1 11.700V9" fill="none" stroke="#fff" strokeWidth="1.300" />
            <path d="M6 5.500h6v5.700H2.800V9.500zM14.500 6.500h1.500v3.500h-1.500zM3 .5L.2 5.500h2L1.200 9l4-5h-2L5 .5z" fill="#fff" />
          </svg>
        </button>
        <button type="button" className="ml-4 mr-[7px] text-right">
          19:19
          <br />
          21-05-2023
        </button>
        <span className="flex size-4 items-center justify-center rounded-full bg-[#4cc2ff] text-[10px] text-black">2</span>
      </div>
    </footer>
  );
}

export default function App() {
  return (
    <div className="flex h-screen flex-col overflow-hidden bg-black font-['Open_Sans','Noto_Sans',sans-serif]">
      <main className="relative min-h-0 flex-1 bg-[radial-gradient(ellipse_330px_110px_at_713px_62px,#0c0e16,#000)]">
        <DesktopIcons />
        <div className="absolute left-[698px] top-[61px] h-4 w-[30px] rounded-[50%] bg-[#c3c6d6]" />
        <BrowserWindow />
      </main>
      <Taskbar />
    </div>
  );
}
